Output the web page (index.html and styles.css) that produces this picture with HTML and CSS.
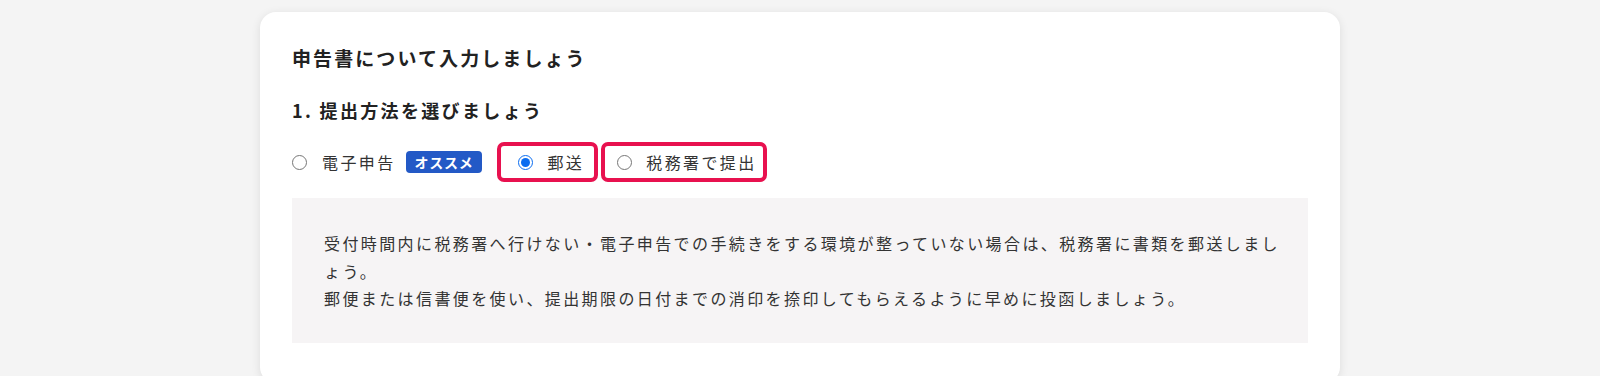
FILE: index.html
```html
<!DOCTYPE html>
<html lang="ja">
<head>
  <meta charset="UTF-8">
  <meta name="viewport" content="width=device-width, initial-scale=1.0">
  <title>申告書について入力しましょう</title>
  <link rel="stylesheet" href="styles.css">
</head>
<body>

<main class="card">
  <h1>申告書について入力しましょう</h1>

  <section class="step">
    <h2>1. 提出方法を選びましょう</h2>

    <div class="options">
      <label class="option">
        <input type="radio" name="method" value="e-tax">
        <span>電子申告</span>
        <span class="badge">オススメ</span>
      </label>
      <label class="option mark">
        <input type="radio" name="method" value="post" checked>
        <span>郵送</span>
      </label>
      <label class="option mark">
        <input type="radio" name="method" value="office">
        <span>税務署で提出</span>
      </label>
    </div>

    <div class="note">
      <p>受付時間内に税務署へ行けない・電子申告での手続きをする環境が整っていない場合は、税務署に書類を郵送しましょう。</p>
      <p>郵便または信書便を使い、提出期限の日付までの消印を捺印してもらえるように早めに投函しましょう。</p>
    </div>
  </section>
</main>

</body>
</html>
```

FILE: styles.css
```css
body { margin: 0; background: #f4f4f4; font-family: "Noto Sans CJK JP", "Noto Sans", sans-serif; color: #333; letter-spacing: .15em; }
.card { width: 1080px; box-sizing: border-box; margin: 12px auto 0; background: #fff; border-radius: 16px; box-shadow: 0 2px 10px rgba(0,0,0,0.1); padding: 32px 32px 40px; }
h1 { margin: 0; font-size: 19px; line-height: 27px; font-weight: bold; color: #222; letter-spacing: .11em; }
h2 { margin: 26px 0 0; font-size: 18px; line-height: 27px; font-weight: bold; color: #222; letter-spacing: .13em; }
.options { display: flex; align-items: center; gap: 3px; margin-top: 18px; height: 40px; }
.option { display: flex; align-items: center; height: 40px; box-sizing: border-box; font-size: 16px; color: #333; cursor: pointer; }
.option input { width: 15px; height: 15px; margin: 0 15px 0 0; accent-color: #0a6cf0; }
.option:first-child { margin-right: 12px; }
.mark { border: 4px solid #e8114f; border-radius: 7px; padding: 0 10px 0 17px; }
.mark input { margin-right: 14px; }
.mark:last-child { padding-right: 6px; padding-left: 12px; }
.badge { margin-left: 10px; background: #2359c6; color: #fff; font-size: 14px; font-weight: bold; letter-spacing: .05em; line-height: 22px; padding: 0 9px; border-radius: 4px; }
.note { margin-top: 16px; background: #f6f4f5; padding: 32px 12px 30px 32px; font-size: 16px; line-height: 27.5px; color: #333; }
.note p { margin: 0; }
```
